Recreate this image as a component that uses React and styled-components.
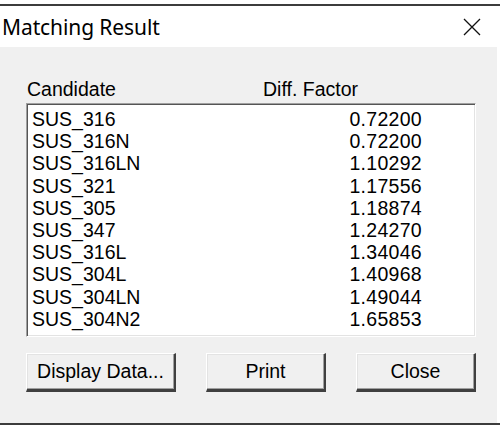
import React from "react"
import styled, { createGlobalStyle } from "styled-components"

const GlobalStyle = createGlobalStyle`
  html, body {
    margin: 0;
    padding: 0;
    background: #ffffff;
    overflow: hidden;
  }
`

const results = [
  { name: "SUS_316", factor: "0.72200" },
  { name: "SUS_316N", factor: "0.72200" },
  { name: "SUS_316LN", factor: "1.10292" },
  { name: "SUS_321", factor: "1.17556" },
  { name: "SUS_305", factor: "1.18874" },
  { name: "SUS_347", factor: "1.24270" },
  { name: "SUS_316L", factor: "1.34046" },
  { name: "SUS_304L", factor: "1.40968" },
  { name: "SUS_304LN", factor: "1.49044" },
  { name: "SUS_304N2", factor: "1.65853" },
]

const Screen = styled.div`
  width: 500px;
  height: 427px;
  display: flex;
  flex-direction: column;
  background: #ffffff;
  font-family: "Liberation Sans", Arial, sans-serif;
  color: #000000;
`

const EdgeLine = styled.div`
  height: 2px;
  margin-top: ${ p => p.top }px;
  background: #3c3c3c;
  flex-shrink: 0;
`

const TitleBar = styled.div`
  height: 41px;
  display: flex;
  align-items: center;
  justify-content: space-between;
  padding: 1px 19px 0 2px;
  box-sizing: border-box;
  background: #ffffff;
  flex-shrink: 0;
`

const Title = styled.h1`
  margin: 0;
  font-family: "Noto Sans", "Open Sans", sans-serif;
  font-weight: 400;
  font-size: 21px;
  letter-spacing: -0.1px;
  color: #000000;
`

const CloseGlyph = styled.svg`
  width: 18px;
  height: 18px;
  display: block;
`

const Body = styled.div`
  width: 497px;
  height: 376px;
  background: #f0f0f0;
  padding: 31px 0 0 26px;
  box-sizing: border-box;
  flex-shrink: 0;
`

const Header = styled.div`
  display: grid;
  grid-template-columns: 236px auto;
  padding-left: 1px;
  height: 25px;
  line-height: 22px;
  font-size: 19.5px;
`

const ListBox = styled.div`
  width: 450px;
  height: 234px;
  box-sizing: border-box;
  background: #ffffff;
  border-top: 1px solid #a0a0a0;
  border-left: 1px solid #a0a0a0;
  border-right: 1px solid #ffffff;
  border-bottom: 1px solid #ffffff;
  box-shadow: inset 1px 1px 0 #555555, inset -1px -1px 0 #e3e3e3;
  padding: 4px 0 0 0;
`

const Row = styled.div`
  display: flex;
  justify-content: space-between;
  height: 22.2px;
  line-height: 22px;
  padding: 0 53px 0 5px;
  font-size: 19.5px;
`

const Value = styled.span`
  letter-spacing: 0.3px;
`

const ButtonRow = styled.div`
  display: flex;
  gap: 30px;
  margin-top: 16px;
`

const Button = styled.button`
  width: ${ p => p.w }px;
  height: 39px;
  box-sizing: border-box;
  padding: 0;
  background: #f0f0f0;
  font-family: "Liberation Sans", Arial, sans-serif;
  font-size: 19.5px;
  color: #000000;
  border-top: 1px solid #ffffff;
  border-left: 1px solid #ffffff;
  border-right: 2px solid #404040;
  border-bottom: 3px solid #404040;
  box-shadow: inset -1px -1px 0 #a0a0a0, inset 1px 1px 0 #e3e3e3;
  display: flex;
  align-items: center;
  justify-content: center;
`

const Footer = styled.div`
  flex: 1;
  background: #ffffff;
`

export default function App() {
  return (
    <Screen>
      <GlobalStyle />
      <EdgeLine top={ 4 } />
      <TitleBar>
        <Title>Matching Result</Title>
        <CloseGlyph viewBox="0 0 18 18">
          <path d="M1 1 L17 17 M17 1 L1 17" stroke="#111" strokeWidth="1.3" fill="none" />
        </CloseGlyph>
      </TitleBar>
      <Body>
        <Header>
          <span>Candidate</span>
          <span>Diff. Factor</span>
        </Header>
        <ListBox>
          { results.map(r => (
            <Row key={ r.name }>
              <span>{ r.name }</span>
              <Value>{ r.factor }</Value>
            </Row>
          )) }
        </ListBox>
        <ButtonRow>
          <Button w={ 150 }>Display Data...</Button>
          <Button w={ 120 }>Print</Button>
          <Button w={ 120 }>Close</Button>
        </ButtonRow>
      </Body>
      <EdgeLine top={ 0 } />
      <Footer />
    </Screen>
  )
}
